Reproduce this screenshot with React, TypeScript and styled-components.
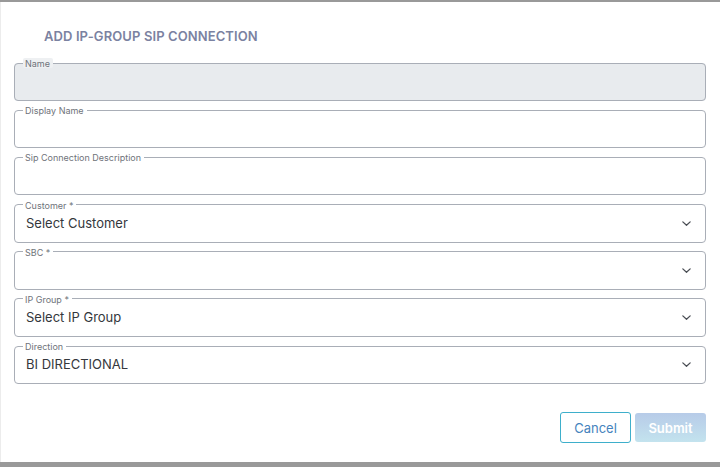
import React from "react";
import styled, { createGlobalStyle } from "styled-components";

const Global = createGlobalStyle`
  html, body { margin: 0; padding: 0; }
  body {
    background: #999999;
    font-family: Inter, "Noto Sans", "Liberation Sans", sans-serif;
    -webkit-font-smoothing: antialiased;
  }
  * { box-sizing: border-box; }
`;

const Backdrop = styled.div`
  width: 720px;
  height: 467px;
  padding: 2px 0 5px;
  background: #999999;
`;

const Modal = styled.div`
  height: 460px;
  background: #ffffff;
  border-left: 1px solid #ececec;
  padding: 0 14px 0 13px;
  display: flex;
  flex-direction: column;
`;

const Title = styled.h2`
  margin: 27px 0 0 30px;
  font-size: 13px;
  line-height: 14px;
  font-weight: 600;
  color: #7b82a1;
  letter-spacing: 0.1px;
`;

const Form = styled.form`
  margin-top: 15px;
  display: flex;
  flex-direction: column;
  gap: 4.2px;
`;

const Field = styled.fieldset<{ $disabled?: boolean }>`
  margin: 0;
  min-width: 0;
  padding: 0 11px;
  border: 1px solid #a9aeb7;
  border-radius: 4px;
  background: ${(p) => (p.$disabled ? "#e8ebee" : "#ffffff")};
`;

const Legend = styled.legend<{ $disabled?: boolean }>`
  margin-left: -3px;
  padding: 0 3px 0 2px;
  font-size: 9px;
  line-height: 10px;
  color: #6f737a;
  background: ${(p) => (p.$disabled ? "#eef0f2" : "transparent")};
  border-radius: 2px;
`;

const LegendText = styled.span`
  position: relative;
  top: 1px;
`;

const Row = styled.div`
  height: 32px;
  display: flex;
  align-items: center;
  justify-content: space-between;
`;

const Value = styled.span`
  font-size: 13px;
  line-height: 16px;
  color: #34373c;
  margin-top: -6px;
`;

const Chevron = styled.svg`
  width: 11px;
  height: 11px;
  margin-right: 2px;
  margin-top: -5px;
  flex: none;
`;

const Footer = styled.div`
  margin-top: 28px;
  display: flex;
  justify-content: flex-end;
  gap: 4px;
`;

const Button = styled.button<{ $primary?: boolean }>`
  width: 71px;
  border-radius: 3px;
  font-family: inherit;
  font-size: 13px;
  cursor: pointer;
  padding: 0;
  border: ${(p) => (p.$primary ? "none" : "1px solid #3eafcb")};
  color: ${(p) => (p.$primary ? "#ffffff" : "#4683bd")};
  font-weight: ${(p) => (p.$primary ? 600 : 400)};
  background: ${(p) =>
    p.$primary ? "linear-gradient(180deg, #b7cbe8 0%, #c3e3ee 100%)" : "#ffffff"};
  margin-top: ${(p) => (p.$primary ? "1px" : "0")};
  height: ${(p) => (p.$primary ? "29px" : "31px")};
`;

const Caret = () => (
  <Chevron viewBox="0 0 12 12" fill="none">
    <path d="M2 4.2 L6 8 L10 4.2" stroke="#4b4f55" strokeWidth="1.4" strokeLinecap="round" strokeLinejoin="round" />
  </Chevron>
);

type FieldDef = { label: string; value?: string; select?: boolean; disabled?: boolean };

const fields: FieldDef[] = [
  { label: "Name", disabled: true },
  { label: "Display Name" },
  { label: "Sip Connection Description" },
  { label: "Customer *", value: "Select Customer", select: true },
  { label: "SBC *", value: "", select: true },
  { label: "IP Group *", value: "Select IP Group", select: true },
  { label: "Direction", value: "BI DIRECTIONAL", select: true },
];

export default function App() {
  return (
    <>
      <Global />
      <Backdrop>
        <Modal>
          <Title>ADD IP-GROUP SIP CONNECTION</Title>
          <Form onSubmit={(e) => e.preventDefault()}>
            {fields.map((f) => (
              <Field key={f.label} $disabled={f.disabled}>
                <Legend $disabled={f.disabled}>
                  <LegendText>{f.label}</LegendText>
                </Legend>
                <Row>
                  <Value>{f.value ?? ""}</Value>
                  {f.select && <Caret />}
                </Row>
              </Field>
            ))}
          </Form>
          <Footer>
            <Button type="button">Cancel</Button>
            <Button type="button" $primary>Submit</Button>
          </Footer>
        </Modal>
      </Backdrop>
    </>
  );
}
